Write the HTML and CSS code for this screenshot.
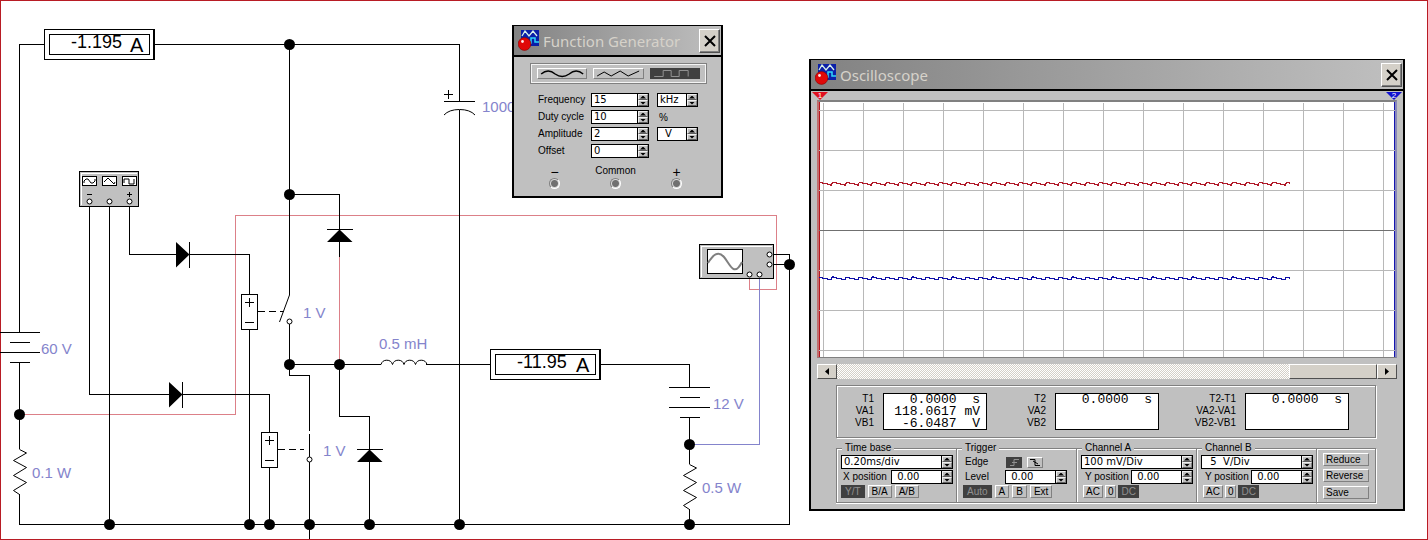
FILE: index.html
```html
<!DOCTYPE html>
<html lang="en">
<head>
<meta charset="utf-8">
<title>Circuit workspace</title>
<link rel="stylesheet" href="styles.css">
</head>
<body>
<main class="desktop">

<svg class="schematic" width="1428" height="540" viewBox="0 0 1428 540" role="img" aria-label="Converter circuit">
  <defs>
    <symbol id="app-icon" viewBox="0 0 21 21">
      <rect x="3" y="0" width="18" height="16" fill="#0a1fa8"/>
      <path d="M4 6l3-5 4 5 4-5 4 5" fill="none" stroke="#d8f0e8" stroke-width="1.3"/>
      <path d="M10 13h3V8h4v4h4" fill="none" stroke="#30d8f8" stroke-width="1.5"/>
      <circle cx="6.5" cy="14" r="6.4" fill="#e00808" stroke="#8a0000" stroke-width=".6"/>
      <circle cx="4.5" cy="11.5" r="1.4" fill="#ffe8e8"/>
    </symbol>
    <g id="relay"><rect x=".5" y=".5" width="16" height="35"/><path d="M4 8.500h9M8.500 4v9M4 28.500h9"/></g>
    <path id="zigzag" d="M6 0L13 3.500L0 11L13 18L0 26L13 33L0 41L6 45"/>
    <path id="battery" d="M0 .5h41M11 10.500h20M0 20.500h41M11 30.500h20"/>
  </defs>

  <g class="wire signal-red">
    <path d="M19.500 414.500H235.500V215.500H776.500V289.500H749.500V277"/>
    <path d="M339.500 257V364"/>
  </g>
  <path class="wire signal-blue" d="M759.500 277V444.500H690"/>

  <g class="wire">
    <path d="M19.500 332V44.500H44M154 44.500H459.500V101M459.500 110V524M19.500 363V449M19.500 494V524.500H789.500V254.500H772M772 264.500H789"/>
    <path d="M89.500 206V394.500H169M183 394.500H269.500V432M269.500 468V524M109.500 206V524M129.500 206V254.500H176M190 254.500H249.500V294M249.500 330V524"/>
    <path d="M289.500 44V295M289.500 324V375.500H309.500V431M309.500 434V457M309.500 462V539M290 194.500H339.500V257"/>
    <path d="M290 364.500H381M426 364.500H490M339.500 364V416.500H369.500V524M601 364.500H689.500V387M689.500 418V464M689.500 509V524"/>
    <path d="M189.500 242V268M182.500 382V408M327 229.500H353M357 449.500H383M444 101.500H475M444 94.500H453M448.500 90V99"/>
    <path d="M258 311.500H284M278 449.500H304" stroke-dasharray="7 4"/>
    <use href="#relay" x="241" y="294"/>
    <use href="#relay" x="261" y="432"/>
    <use href="#battery" x="-1" y="332"/>
    <use href="#battery" x="669" y="387"/>
  </g>
  <g class="curve">
    <path d="M289.500 295L279.500 322M444 115Q449 109.500 459.500 109.500T475 115"/>
    <path d="M381 364.500a6 6 0 0 1 11.500 0a6 6 0 0 1 11.500 0a6 6 0 0 1 11.500 0a6 6 0 0 1 11.500 0"/>
    <use href="#zigzag" x="13.500" y="449.500"/>
    <use href="#zigzag" x="683.500" y="464.500"/>
    <circle cx="289.500" cy="321.500" r="2.500"/>
    <circle cx="309.500" cy="459.500" r="2.500"/>
  </g>
  <path d="M176 242V267.500L189.500 254.500ZM169 382V407.500L182.500 394.500ZM327 242H352.500L339.500 229.500ZM357 462H382.500L369.500 449.500Z"/>
  <g>
    <circle cx="289.500" cy="44.500" r="5.500"/><circle cx="289.500" cy="194.500" r="5.500"/><circle cx="289.500" cy="364.500" r="5.500"/>
    <circle cx="339.500" cy="364.500" r="5.500"/><circle cx="19.500" cy="414.500" r="5.500"/><circle cx="689.500" cy="444.500" r="5.500"/>
    <circle cx="789.500" cy="264.500" r="5.500"/><circle cx="109.500" cy="524.500" r="5.500"/><circle cx="249.500" cy="524.500" r="5.500"/>
    <circle cx="269.500" cy="524.500" r="5.500"/><circle cx="309.500" cy="524.500" r="5.500"/><circle cx="369.500" cy="524.500" r="5.500"/>
    <circle cx="459.500" cy="524.500" r="5.500"/><circle cx="689.500" cy="524.500" r="5.500"/>
  </g>

  <g class="meter">
    <rect x="44.500" y="29.500" width="109" height="30"/><path d="M154.500 29V60"/><rect x="49.500" y="34.500" width="100" height="20"/>
    <rect x="490.500" y="349.500" width="109" height="30"/><path d="M600.500 349V380"/><rect x="495.500" y="354.500" width="100" height="20"/>
  </g>
  <g class="reading">
    <text x="71" y="48">-1.195</text><text class="unit" x="130" y="52">A</text>
    <text x="517" y="368">-11.95</text><text class="unit" x="576" y="372">A</text>
  </g>

  <g class="device">
    <rect x="79.500" y="171.500" width="59" height="35"/>
    <path class="lit" d="M81 205V173H137"/>
    <path class="screen" d="M82.500 176.500h14v9h-14zM102.500 176.500h14v9h-14zM122.500 176.500h14v9h-14z"/>
    <rect x="699.500" y="244.500" width="74" height="34"/>
    <path class="lit" d="M701 277V246H772"/>
    <rect class="screen" x="707.500" y="249.500" width="35" height="24"/>
  </g>
  <g class="curve">
    <path d="M84 183v-2l2-2h2l3 4h2l2-2v-2M104 182l4-4 6 6 1-2M124 183v-4h5v5h5v-5M87 194.500h5M127 194.500h5M129.500 192v5"/>
    <path d="M708 263C713 255 718 250 724 257S734 278 742 262" class="trace"/>
    <g class="terminal">
      <circle cx="89.500" cy="201.500" r="2.500"/><circle cx="109.500" cy="201.500" r="2.500"/><circle cx="129.500" cy="201.500" r="2.500"/>
      <circle cx="769.500" cy="254.500" r="2.500"/><circle cx="769.500" cy="264.500" r="2.500"/><circle cx="749.500" cy="274.500" r="2.500"/><circle cx="759.500" cy="274.500" r="2.500"/>
    </g>
  </g>

  <g class="value">
    <text x="41" y="354">60 V</text><text x="32" y="478">0.1 W</text><text x="303" y="318">1 V</text>
    <text x="323" y="456">1 V</text><text x="379" y="349">0.5 mH</text><text x="713" y="409">12 V</text>
    <text x="702" y="493">0.5 W</text><text x="482" y="112">1000</text>
  </g>
</svg>

<section class="window generator" aria-label="Function Generator">
  <header class="titlebar">
    <svg class="app-icon"><use href="#app-icon"/></svg>
    <h2>Function Generator</h2>
    <button class="close" aria-label="Close"><svg viewBox="0 0 12 12"><path d="M1 1l10 10M11 1L1 11"/></svg></button>
  </header>
  <div class="generator-body">
    <div class="shapes">
      <button aria-label="Sine"><svg viewBox="0 0 48 9"><path d="M3 5q7-6 14 0q7 5 14 0q7-6 14 0" stroke-width="1.5"/></svg></button>
      <button aria-label="Triangle"><svg viewBox="0 0 48 9"><path d="M3 7l7-4 7 4 9-5 8 5 11-5"/></svg></button>
      <button class="on" aria-label="Square"><svg viewBox="0 0 48 9"><path d="M3 7.500h9V1.500h8v6h8V1.500h9v6"/></svg></button>
    </div>
    <div class="settings">
      <label for="freq">Frequency</label>
      <span class="spin"><input id="freq" value="15"><span><button aria-label="Frequency up"></button><button aria-label="Frequency down"></button></span></span>
      <span class="spin"><input aria-label="Frequency unit" value="kHz"><span><button aria-label="Unit up"></button><button aria-label="Unit down"></button></span></span>
      <label for="duty">Duty cycle</label>
      <span class="spin"><input id="duty" value="10"><span><button aria-label="Duty up"></button><button aria-label="Duty down"></button></span></span>
      <span class="percent">%</span>
      <label for="amp">Amplitude</label>
      <span class="spin"><input id="amp" value="2"><span><button aria-label="Amplitude up"></button><button aria-label="Amplitude down"></button></span></span>
      <span class="spin volt"><input aria-label="Amplitude unit" value="V"><span><button aria-label="Unit up"></button><button aria-label="Unit down"></button></span></span>
      <label for="offset">Offset</label>
      <span class="spin"><input id="offset" value="0"><span><button aria-label="Offset up"></button><button aria-label="Offset down"></button></span></span>
    </div>
    <div class="outputs">
      <span class="sign">−</span><span>Common</span><span class="sign">+</span>
      <i class="jack"></i><i class="jack"></i><i class="jack"></i>
    </div>
  </div>
</section>

<section class="window oscilloscope" aria-label="Oscilloscope">
  <header class="titlebar">
    <svg class="app-icon"><use href="#app-icon"/></svg>
    <h2>Oscilloscope</h2>
    <button class="close" aria-label="Close"><svg viewBox="0 0 12 12"><path d="M1 1l10 10M11 1L1 11"/></svg></button>
  </header>
  <div class="cursors"><span class="cursor-one">1</span><span class="cursor-two">2</span></div>
  <div class="plot">
    <svg width="100%" height="255" role="img" aria-label="Channel traces">
      <defs>
        <pattern id="grid" x="4" y="8" width="40" height="40" patternUnits="userSpaceOnUse"><path d="M.5 0V40M0 .5H40" stroke="#b8b8b8"/></pattern>
        <pattern id="ripple-a" y="79" width="40" height="8" patternUnits="userSpaceOnUse"><path class="ripple" d="M0 1.500h3v1h5v1h3v1h1v-2h1v-1h4v1h4v1h4v1h1v-2h1v-1h3v1h5v1h3v1h1v-2h1" stroke="#b01828"/></pattern>
        <pattern id="ripple-b" y="173" width="40" height="8" patternUnits="userSpaceOnUse"><path class="ripple" d="M0 2.500h3v1h5v1h4v-2h1v-1h1v1h3v1h5v1h4v-2h4v1h5v1h4v-2h1" stroke="#1010a8"/></pattern>
      </defs>
      <rect y="1" width="100%" height="254" fill="url(#grid)"/>
      <path d="M0 128.500H575" stroke="#707070"/>
      <rect y="79" width="471" height="8" fill="url(#ripple-a)"/>
      <rect y="173" width="471" height="8" fill="url(#ripple-b)"/>
    </svg>
  </div>
  <div class="scrollbar">
    <button class="left" aria-label="Scroll left"></button>
    <span class="track"></span>
    <button class="thumb" aria-label="Scroll position"></button>
    <button class="right" aria-label="Scroll right"></button>
  </div>
  <div class="readouts">
    <div class="names">T1<br>VA1<br>VB1</div>
    <pre class="lcd">0.0000  s
118.0617 mV
-6.0487  V</pre>
    <div class="names">T2<br>VA2<br>VB2</div>
    <pre class="lcd">0.0000  s</pre>
    <div class="names">T2-T1<br>VA2-VA1<br>VB2-VB1</div>
    <pre class="lcd">0.0000  s</pre>
  </div>
  <div class="controls">
    <fieldset>
      <legend>Time base</legend>
      <span class="spin"><input aria-label="Time base" value="0.20ms/div"><span><button aria-label="Time base up"></button><button aria-label="Time base down"></button></span></span>
      <div class="row"><label for="xpos">X position</label><span class="spin"><input id="xpos" value=" 0.00"><span><button aria-label="X up"></button><button aria-label="X down"></button></span></span></div>
      <div class="modes"><button class="on">Y/T</button><button>B/A</button><button>A/B</button></div>
    </fieldset>
    <fieldset class="trigger">
      <legend>Trigger</legend>
      <div class="row edge"><span>Edge</span>
        <button class="on" aria-label="Rising edge"><svg viewBox="0 0 14 9"><path d="M3 7.500h4v-6h5M5 4.500h5"/></svg></button>
        <button aria-label="Falling edge"><svg viewBox="0 0 14 9"><path d="M2 1.500h5v6h5M5 3l5 3"/></svg></button>
      </div>
      <div class="row"><label for="level">Level</label><span class="spin"><input id="level" value=" 0.00"><span><button aria-label="Level up"></button><button aria-label="Level down"></button></span></span></div>
      <div class="modes"><button class="on">Auto</button><button>A</button><button>B</button><button>Ext</button></div>
    </fieldset>
    <fieldset class="channel">
      <legend>Channel A</legend>
      <span class="spin"><input aria-label="Channel A scale" value="100 mV/Div"><span><button aria-label="Scale up"></button><button aria-label="Scale down"></button></span></span>
      <div class="row"><label for="ya">Y position</label><span class="spin"><input id="ya" value=" 0.00"><span><button aria-label="Y up"></button><button aria-label="Y down"></button></span></span></div>
      <div class="modes"><button>AC</button><button>0</button><button class="on">DC</button></div>
    </fieldset>
    <fieldset class="channel">
      <legend>Channel B</legend>
      <span class="spin"><input aria-label="Channel B scale" value="  5  V/Div"><span><button aria-label="Scale up"></button><button aria-label="Scale down"></button></span></span>
      <div class="row"><label for="yb">Y position</label><span class="spin"><input id="yb" value=" 0.00"><span><button aria-label="Y up"></button><button aria-label="Y down"></button></span></span></div>
      <div class="modes"><button>AC</button><button>0</button><button class="on">DC</button></div>
    </fieldset>
    <div class="actions"><button>Reduce</button><button>Reverse</button><button>Save</button></div>
  </div>
</section>

</main>
</body>
</html>
```

FILE: styles.css
```css
* { box-sizing: border-box; }

body {
  margin: 0;
  background: #fff;
  color: #000;
  font: 10px/12px "Liberation Sans", Arial, sans-serif;
}

.desktop {
  position: relative;
  min-height: 100vh;
  overflow: hidden;
  box-shadow: inset 0 0 0 1px #b81c24;
}

/* Schematic */
.schematic { display: block; }
.wire, .meter, .device { fill: none; stroke: #000; shape-rendering: crispEdges; }
.signal-red { stroke: #dc8088; }
.signal-blue { stroke: #8484cc; }
.curve { fill: none; stroke: #000; }
.meter rect { fill: #fff; }
.device rect { fill: #c0c0c0; }
.device .screen { fill: #fff; }
.device .lit { stroke: #fff; }
.trace { stroke: #808080; stroke-width: 2; }
.terminal { fill: #fff; }
.reading { font-size: 18px; }
.reading .unit { font-size: 20px; }
.value { font-size: 15px; fill: #8484cc; }

/* Windows */
.window {
  position: absolute;
  background: #c0c0c0;
  border: 2px solid #000;
  border-top-width: 1px;
}
.generator { left: 512px; top: 25px; width: 211px; }
.oscilloscope { left: 809px; top: 59px; width: 596px; }

.titlebar {
  display: flex;
  align-items: center;
  gap: 4px;
  height: 31px;
  padding: 0 1px 0 4px;
  border-bottom: 2px solid #000;
  background: linear-gradient(90deg, #828282, #c0c0c0);
}
.titlebar h2 {
  flex: 1;
  margin: 0;
  color: #d6d2ca;
  font: 15px/20px "Noto Sans", sans-serif;
  white-space: nowrap;
}
.app-icon { width: 21px; height: 21px; }

button {
  padding: 0;
  border: 1px solid;
  border-color: #fff #808080 #808080 #fff;
  background: #c0c0c0;
  color: #000;
  font: inherit;
}
button svg { display: block; fill: none; stroke: currentColor; }
.on { border-color: #404040; background: #404040; color: #909090; }
.close {
  display: grid;
  place-items: center;
  width: 21px;
  height: 24px;
  background: #d4d0c8;
  border-color: #fff #505050 #505050 #fff;
  box-shadow: inset -1px -1px #808080;
}
.close svg { width: 12px; height: 12px; stroke-width: 2; }

/* Spinner fields */
.spin { display: flex; height: 14px; border: 1px solid #000; background: #fff; }
.spin input {
  flex: 1;
  min-width: 0;
  padding: 0 0 0 2px;
  border: 0;
  background: none;
  font: 10px/12px "DejaVu Sans", sans-serif;
}
.spin > span { display: grid; grid-template-rows: 1fr 1fr; width: 11px; border-left: 1px solid #000; }
.spin button { display: grid; place-items: center; border-color: #f0f0f0 #808080 #606060 #f0f0f0; }
.spin button::before { content: ""; width: 6px; height: 3px; background: #000; clip-path: polygon(50% 0, 100% 100%, 0 100%); }
.spin button:last-child::before { clip-path: polygon(0 0, 100% 0, 50% 100%); }
.volt input { padding-left: 7px; }

/* Function generator */
.generator-body { padding: 6px 14px 7px 16px; }
.shapes {
  display: grid;
  grid-template-columns: repeat(3, 1fr);
  gap: 6px;
  padding: 4px 6px;
  border: 1px solid #808080;
  outline: 1px solid #f4f4f4;
  outline-offset: -2px;
}
.shapes button { height: 11px; }
.shapes svg { width: 100%; height: 9px; }
.settings {
  display: grid;
  grid-template-columns: 53px 58px 41px;
  grid-auto-rows: 14px;
  row-gap: 3px;
  margin: 9px 0 7px 8px;
}
.settings > :nth-child(3n) { margin-left: 8px; margin-right: -8px; }
.percent { padding: 2px; }
.settings label { padding-top: 1px; }
.outputs { display: grid; grid-template: 12px 11px / repeat(3, 61px); justify-items: center; margin-left: -6px; row-gap: 1px; }
.sign { font-size: 14px; line-height: 14px; }
.jack { width: 11px; height: 11px; border: 1px solid; border-color: #808080 #fff #fff #808080; border-radius: 50%; background: radial-gradient(#707070 0 3px, #d8d8d8 4px); }

/* Oscilloscope display */
.cursors { display: flex; justify-content: space-between; height: 9px; padding: 1px 1px 0; }
.cursors span {
  width: 16px;
  height: 8px;
  clip-path: polygon(0 0, 100% 0, 50% 100%);
  color: #fff;
  font-size: 8px;
  line-height: 8px;
  text-align: center;
}
.cursor-one { background: #e01020; }
.cursor-two { background: #1010d0; }
.plot {
  margin: 0 6px;
  border: 2px solid #808080;
  border-left-color: #c07070;
  border-bottom-width: 1px;
  border-right-color: #8888b8;
  background: #fff;
  box-shadow: inset 1px 0 #b81820, inset -1px 0 #1414b0;
}
.plot svg { display: block; }
.ripple { fill: none; shape-rendering: crispEdges; }
.scrollbar { display: flex; height: 15px; margin: 6px 6px 6px; }
.scrollbar button { background: #d4d0c8; border-color: #fff #505050 #505050 #fff; }
.track { flex: 1; background: repeating-conic-gradient(#fff 0 25%, #d4d0c8 0 50%) 0 0 / 2px 2px; }
.thumb { width: 88px; }
.scrollbar .left, .scrollbar .right { display: grid; place-items: center; width: 20px; }
.left::before, .right::before { content: ""; width: 4px; height: 7px; background: #000; }
.left::before { clip-path: polygon(100% 0, 100% 100%, 0 50%); }
.right::before { clip-path: polygon(0 0, 100% 50%, 0 100%); }

/* Measurements */
.readouts {
  display: grid;
  grid-template-columns: 37px 104px 50px 104px 68px 104px;
  column-gap: 9px;
  margin: 0 27px 4px 25px;
  padding: 7px 0;
  border: 1px solid #808080;
  box-shadow: 1px 1px #fff, inset 1px 1px #fff;
}
.names { text-align: right; }
.lcd {
  height: 37px;
  margin: 0;
  padding: 0 6px 0 0;
  border: 1px solid #000;
  background: #fff;
  font: 13px/12px "Liberation Mono", monospace;
  text-align: right;
}

/* Controls */
.controls {
  display: grid;
  grid-template-columns: repeat(4, 120px) 1fr;
  margin: 0 27px 6px 25px;
}
fieldset { min-width: 0; margin: 0; padding: 1px 3px 4px 4px; border: 1px solid #808080; border-right: 0; box-shadow: inset 1px 1px #fff, 0 1px #fff; }
legend { margin-left: 1px; padding: 0 3px; height: 12px; background: #c0c0c0; }
.row { display: flex; align-items: center; justify-content: space-between; height: 14px; margin: 1px 0; padding-left: 2px; }
.row .spin { width: 62px; }
.trigger { padding-left: 6px; padding-right: 9px; }
.trigger legend { margin-left: -1px; }
.row.edge { justify-content: flex-start; gap: 5px; margin: 0; }
.edge span { width: 36px; }
.edge button { width: 16px; height: 11px; }
.modes { display: flex; gap: 3px; }
.modes button { height: 13px; padding: 0 3px; line-height: 11px; }
.channel .row { padding-left: 4px; }
.channel .modes { gap: 2px; padding-left: 2px; }
.channel .modes button { padding: 0 2px; }
.actions {
  display: grid;
  align-content: space-evenly;
  margin-top: 6px;
  padding: 0 6px;
  border: 1px solid #808080;
  box-shadow: inset 1px 1px #fff, 1px 1px #fff;
}
.actions button { height: 13px; padding: 0 2px; line-height: 11px; text-align: left; }
```
